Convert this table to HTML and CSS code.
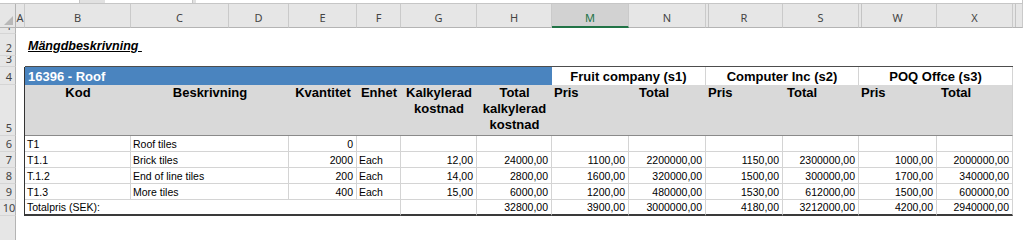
FILE: index.html
```html
<!DOCTYPE html>
<html lang="sv">
<head>
  <meta charset="UTF-8" />
  <title>Mängdbeskrivning</title>
  <link rel="stylesheet" href="styles.css">
</head>
<body>
  <div class="topbar">
    <div class="box name-box"></div>
    <div class="box fx-box"></div>
    <div class="box formula-box"></div>
  </div>

  <table class="sheet">
    <colgroup>
      <col class="w-rh">
      <col class="w-a">
      <col class="w-b">
      <col class="w-c">
      <col class="w-d">
      <col class="w-e">
      <col class="w-f">
      <col class="w-g">
      <col class="w-h">
      <col class="w-m">
      <col class="w-n">
      <col class="w-r">
      <col class="w-s">
      <col class="w-w">
      <col class="w-x">
      <col class="w-rest">
    </colgroup>
    <thead>
      <tr class="colhdr">
        <th class="corner">
          <svg width="16" height="23" viewBox="0 0 16 23"><polygon points="13,12 13,21 4,21" fill="#b8b8b8"/></svg>
        </th>
        <th>A</th>
        <th>B</th>
        <th>C</th>
        <th>D</th>
        <th>E</th>
        <th>F</th>
        <th>G</th>
        <th>H</th>
        <th class="sel">M</th>
        <th>N</th>
        <th class="gap">R</th>
        <th>S</th>
        <th class="gap">W</th>
        <th>X</th>
        <th class="gap"></th>
      </tr>
    </thead>
    <tbody>
      <tr class="r1">
        <th class="rh"><div class="rn">1</div></th>
        <td colspan="15"></td>
      </tr>
      <tr class="r2">
        <th class="rh"><div class="rn">2</div></th>
        <td></td>
        <td colspan="3" class="title">Mängdbeskrivning&nbsp;</td>
        <td colspan="11"></td>
      </tr>
      <tr class="r3">
        <th class="rh"><div class="rn">3</div></th>
        <td></td>
        <td colspan="13" class="top-edge"></td>
        <td></td>
      </tr>
      <tr class="r4">
        <th class="rh"><div class="rn">4</div></th>
        <td class="lead"></td>
        <td colspan="7" class="section">16396 - Roof</td>
        <td colspan="2" class="supplier">Fruit company (s1)</td>
        <td colspan="2" class="supplier">Computer Inc (s2)</td>
        <td colspan="2" class="supplier">POQ Offce (s3)</td>
        <td></td>
      </tr>
      <tr class="r5 heads">
        <th class="rh"><div class="rn">5</div></th>
        <td class="lead"></td>
        <th>Kod</th>
        <th colspan="2">Beskrivning</th>
        <th>Kvantitet</th>
        <th>Enhet</th>
        <th>Kalkylerad<br>kostnad</th>
        <th>Total<br>kalkylerad<br>kostnad</th>
        <th class="l">Pris</th>
        <th class="l ind">Total</th>
        <th class="l">Pris</th>
        <th class="l ind-s">Total</th>
        <th class="l">Pris</th>
        <th class="l ind-s end">Total</th>
        <td></td>
      </tr>
      <tr class="r16 item">
        <th class="rh"><div class="rn">6</div></th>
        <td class="lead"></td>
        <td>T1</td>
        <td colspan="2">Roof tiles</td>
        <td class="num">0</td>
        <td></td>
        <td></td>
        <td></td>
        <td></td>
        <td></td>
        <td></td>
        <td></td>
        <td></td>
        <td></td>
        <td class="pad"></td>
      </tr>
      <tr class="r16 item">
        <th class="rh"><div class="rn">7</div></th>
        <td class="lead"></td>
        <td>T1.1</td>
        <td colspan="2">Brick tiles</td>
        <td class="num">2000</td>
        <td>Each</td>
        <td class="num">12,00</td>
        <td class="num">24000,00</td>
        <td class="num">1100,00</td>
        <td class="num">2200000,00</td>
        <td class="num">1150,00</td>
        <td class="num">2300000,00</td>
        <td class="num">1000,00</td>
        <td class="num">2000000,00</td>
        <td class="pad"></td>
      </tr>
      <tr class="r16 item">
        <th class="rh"><div class="rn">8</div></th>
        <td class="lead"></td>
        <td>T.1.2</td>
        <td colspan="2">End of line tiles</td>
        <td class="num">200</td>
        <td>Each</td>
        <td class="num">14,00</td>
        <td class="num">2800,00</td>
        <td class="num">1600,00</td>
        <td class="num">320000,00</td>
        <td class="num">1500,00</td>
        <td class="num">300000,00</td>
        <td class="num">1700,00</td>
        <td class="num">340000,00</td>
        <td class="pad"></td>
      </tr>
      <tr class="r16 item">
        <th class="rh"><div class="rn">9</div></th>
        <td class="lead"></td>
        <td>T1.3</td>
        <td colspan="2">More tiles</td>
        <td class="num">400</td>
        <td>Each</td>
        <td class="num">15,00</td>
        <td class="num">6000,00</td>
        <td class="num">1200,00</td>
        <td class="num">480000,00</td>
        <td class="num">1530,00</td>
        <td class="num">612000,00</td>
        <td class="num">1500,00</td>
        <td class="num">600000,00</td>
        <td class="pad"></td>
      </tr>
      <tr class="r16 item total">
        <th class="rh"><div class="rn">10</div></th>
        <td class="lead"></td>
        <td colspan="5">Totalpris (SEK):</td>
        <td></td>
        <td class="num">32800,00</td>
        <td class="num">3900,00</td>
        <td class="num">3000000,00</td>
        <td class="num">4180,00</td>
        <td class="num">3212000,00</td>
        <td class="num">4200,00</td>
        <td class="num">2940000,00</td>
        <td class="pad"></td>
      </tr>
      <tr class="r11">
        <th class="rh"><div class="rn"></div></th>
        <td colspan="15"></td>
      </tr>
    </tbody>
  </table>
</body>
</html>
```

FILE: styles.css
```css
* {
  box-sizing: border-box;
}

body {
  margin: 0;
  background: #fff;
  overflow: hidden;
  font-family: "Liberation Sans", Arial, sans-serif;
  color: #000;
}

/* bottom edge of the name box / formula bar */
.topbar {
  display: flex;
  height: 4px;
  background: #e1e1e1;
  border-bottom: 1px solid #c6c6c6;
}

.topbar .box {
  background: #fff;
  border-right: 1px solid #c6c6c6;
}

.name-box { width: 80px; }
.fx-box { width: 88px; margin-left: 25px; }
.formula-box { flex: 1; margin-left: 3px; }

.sheet {
  width: 1023px;
  table-layout: fixed;
  border-collapse: separate;
  border-spacing: 0;
}

.sheet td,
.sheet th {
  padding: 0;
  white-space: nowrap;
  overflow: hidden;
  font-weight: normal;
}

.w-rh { width: 16px; }
.w-a { width: 9px; }
.w-b { width: 106px; }
.w-c { width: 98px; }
.w-d { width: 60px; }
.w-e { width: 68px; }
.w-f { width: 44px; }
.w-g { width: 76px; }
.w-h { width: 75px; }
.w-m { width: 77px; }
.w-n { width: 77px; }
.w-r { width: 77px; }
.w-s { width: 76px; }
.w-w { width: 78px; }
.w-x { width: 76px; }
.w-rest { width: 10px; }

/* column letters */
.colhdr th {
  height: 24px;
  background: #e6e6e6;
  border-right: 1px solid #cacaca;
  border-bottom: 1px solid #b4b4b4;
  color: #444;
  font: 11px "Noto Sans", sans-serif;
  text-align: center;
  vertical-align: bottom;
  padding-bottom: 2px;
}

.colhdr th.corner {
  padding: 0;
  vertical-align: top;
  border-right-color: #b4b4b4;
}

.colhdr th.corner svg {
  display: block;
}

.colhdr th.gap {
  box-shadow: inset 2px 0 0 #e6e6e6, inset 3px 0 0 #c4c4c4;
}

.colhdr th.sel {
  background: #d2d2d2;
  color: #217346;
  border-bottom: 2px solid #217346;
  padding-bottom: 1px;
}

/* row numbers */
.rh {
  background: #e6e6e6;
  border-right: 1px solid #b4b4b4;
  border-bottom: 1px solid #d5d5d5;
}

.rn {
  display: flex;
  align-items: flex-end;
  justify-content: center;
  overflow: hidden;
  padding: 0 0 1px 3px;
  color: #444;
  font: 11px/13px "Noto Sans", sans-serif;
}

.r1 .rn { height: 5px; }
.r2 .rn { height: 21px; }
.r3 .rn { height: 10px; }
.r4 .rn { height: 17px; }
.r5 .rn { height: 50px; }
.r16 .rn { height: 15px; }
.r11 .rn { height: 40px; }

.sheet td.title {
  font-size: 12.5px;
  line-height: 14px;
  font-weight: bold;
  font-style: italic;
  text-decoration: underline;
  vertical-align: bottom;
  padding: 0 0 3px 3px;
  overflow: visible;
}

.top-edge {
  border-bottom: 1px solid #4d4d4d;
}

.sheet td.lead {
  border-right: 1px solid #333;
}

/* section title and supplier groups */
.sheet td.section {
  background: #4a84bf;
  color: #fff;
  font-size: 13px;
  line-height: 15px;
  font-weight: bold;
  vertical-align: bottom;
  padding: 0 0 1px 3px;
}

.sheet td.supplier {
  font-size: 13px;
  line-height: 15px;
  font-weight: bold;
  text-align: center;
  vertical-align: bottom;
  border-right: 1px solid #d4d4d4;
  padding-bottom: 1px;
}

.heads th {
  background: #d9d9d9;
  font-size: 13px;
  line-height: 16px;
  font-weight: bold;
  text-align: center;
  vertical-align: top;
  border-bottom: 1px solid #8a8a8a;
}

.heads th.rh {
  background: #e6e6e6;
  border-bottom: 1px solid #d5d5d5;
}

.heads th.l { text-align: left; padding-left: 2px; }
.heads th.ind { padding-left: 10px; }
.heads th.ind-s { padding-left: 4px; }
.heads th.end { border-right: 1px solid #d0d0d0; }

/* item rows */
.item td {
  font-size: 10.5px;
  line-height: 12px;
  vertical-align: bottom;
  padding: 0 2px 1px 2px;
  border-right: 1px solid #d4d4d4;
  border-bottom: 1px solid #d4d4d4;
}

.item td.num {
  text-align: right;
  padding-right: 3px;
}

.item td.lead {
  border-bottom: none;
  border-right: 1px solid #333;
}

.item td.pad {
  border: none;
}

.total td {
  border-bottom: 2px solid #3a3a3a;
}
```
